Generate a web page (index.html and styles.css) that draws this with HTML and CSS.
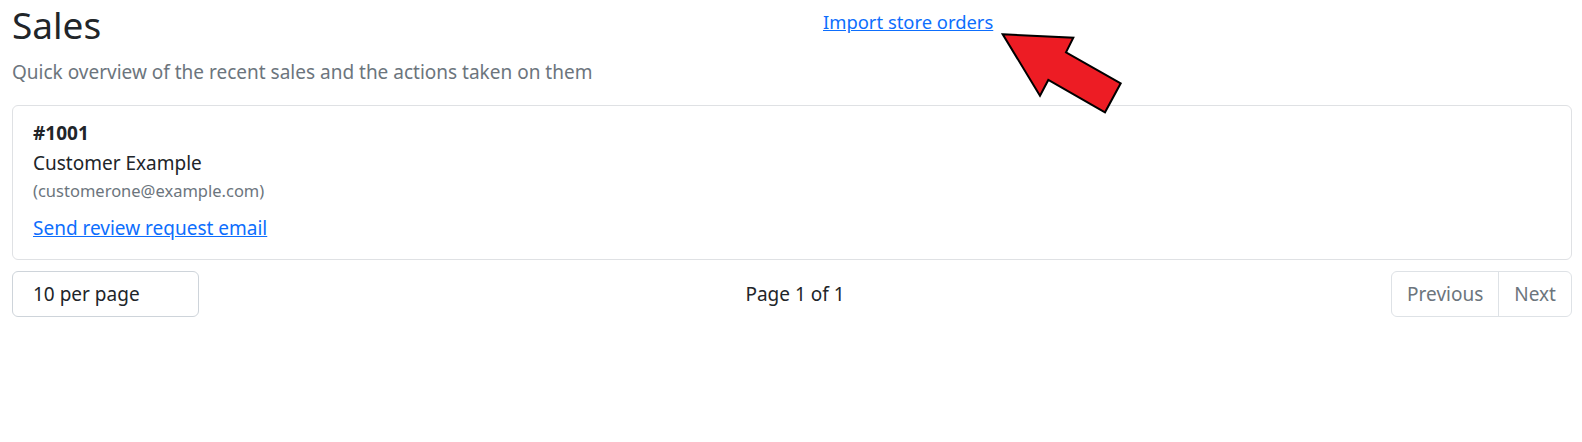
FILE: index.html
```html
<!DOCTYPE html>
<html lang="en">
<head>
<meta charset="utf-8">
<title>Sales</title>
<link rel="stylesheet" href="styles.css">
</head>
<body>
<div class="page">
  <header class="header">
    <div class="titles">
      <h1 class="title">Sales</h1>
      <p class="lead">Quick overview of the recent sales and the actions taken on them</p>
    </div>
    <a class="link import" href="#">Import store orders</a>
  </header>

  <div class="card">
    <div class="card-body">
      <div class="order-no">#1001</div>
      <div class="customer">Customer Example</div>
      <div class="email">(customerone@example.com)</div>
      <a class="link review" href="#">Send review request email</a>
    </div>
  </div>

  <div class="pager-row">
    <select class="per-page">
      <option>10 per page</option>
    </select>
    <div class="page-info">Page 1 of 1</div>
    <ul class="pagination">
      <li class="page-item">Previous</li>
      <li class="page-item">Next</li>
    </ul>
  </div>

  <svg class="arrow" width="130" height="90" viewBox="995 30 130 90" aria-hidden="true">
    <polygon points="1002.7,34.3 1073.3,37.7 1066,52.3 1120.7,83.3 1105,112.3 1048.3,80 1040,95.7" fill="#ed1c24" stroke="#000" stroke-width="2" stroke-linejoin="miter"/>
  </svg>
</div>
</body>
</html>
```

FILE: styles.css
```css
* { box-sizing: border-box; }

body {
  margin: 0;
  background: #fff;
  color: #212529;
  font-family: "Noto Sans", "Open Sans", sans-serif;
  font-size: 19px;
  line-height: 1.5;
}

.page {
  position: relative;
  padding: 0 10px 0 12px;
}

.header {
  display: grid;
  grid-template-columns: 811px auto;
  align-items: start;
}

.title {
  margin: 1px 0 0;
  font-size: 37px;
  font-weight: 400;
  line-height: 48px;
}

.lead {
  margin: 8px 0 0;
  color: #6c757d;
  font-size: 19px;
  line-height: 30px;
}

.link {
  color: #0d6efd;
  text-decoration: underline;
}

.import {
  justify-self: start;
  margin-top: 8px;
  font-size: 18.4px;
}

.card {
  margin-top: 18px;
  border: 1px solid #dfe1e4;
  border-radius: 6px;
  height: 155px;
}

.card-body {
  padding: 12px 20px;
}

.order-no {
  font-weight: 700;
  line-height: 30px;
}

.customer {
  line-height: 30px;
}

.email {
  color: #6c757d;
  font-size: 16.5px;
  line-height: 26px;
}

.review {
  display: inline-block;
  margin-top: 9px;
  line-height: 30px;
}

.pager-row {
  margin-top: 11px;
  display: flex;
  justify-content: space-between;
  align-items: center;
}

.per-page {
  appearance: none;
  -webkit-appearance: none;
  width: 187px;
  height: 46px;
  padding: 0 20px;
  border: 1px solid #ced4da;
  border-radius: 6px;
  background: #fff;
  color: #212529;
  font-family: inherit;
  font-size: 19px;
}

.page-info {
  font-size: 19px;
}

.pagination {
  display: flex;
  margin: 0;
  padding: 0;
  list-style: none;
  border: 1px solid #dee2e6;
  border-radius: 6px;
  height: 46px;
}

.page-item {
  display: flex;
  align-items: center;
  padding: 0 15px;
  color: #6c757d;
  font-size: 19px;
}

.page-item + .page-item {
  border-left: 1px solid #dee2e6;
}

.arrow {
  position: absolute;
  left: 995px;
  top: 30px;
}
```
